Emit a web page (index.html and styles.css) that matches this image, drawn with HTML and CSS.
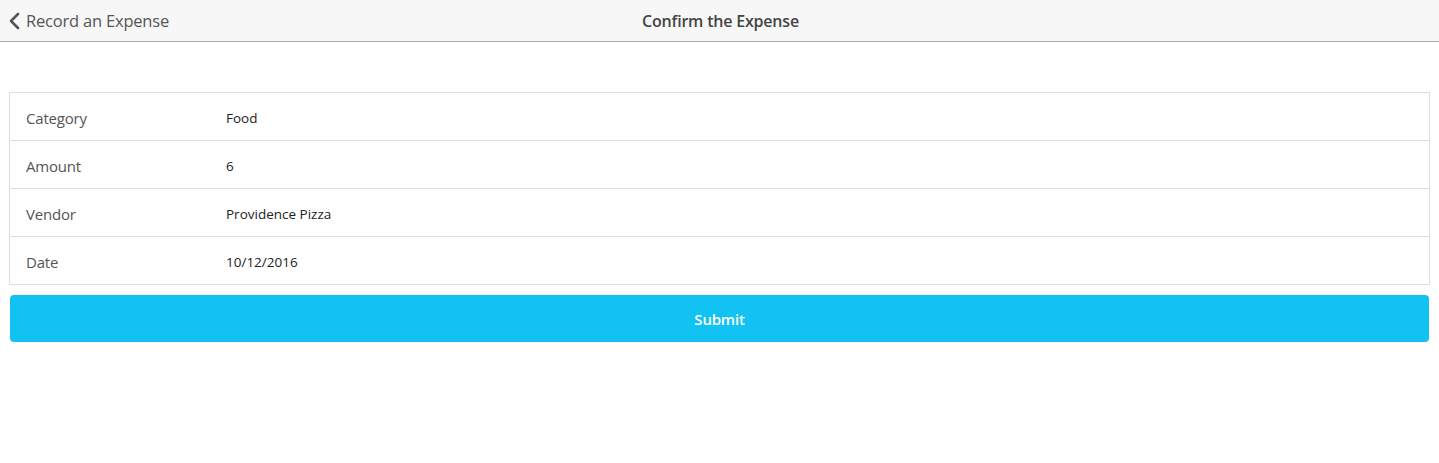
FILE: index.html
```html
<!DOCTYPE html>
<html>
<head>
<meta charset="utf-8">
<link rel="stylesheet" href="styles.css">
</head>
<body>
<header class="navbar">
  <a class="back">
    <svg class="chev" width="12" height="18" viewBox="0 0 12 18"><path d="M10 2 L3 9 L10 16" fill="none" stroke="#555" stroke-width="2.6" stroke-linecap="round" stroke-linejoin="round"/></svg>
    <span>Record an Expense</span>
  </a>
  <div class="title">Confirm the Expense</div>
</header>
<main class="content">
  <div class="list">
    <div class="row"><div class="label">Category</div><div class="value">Food</div></div>
    <div class="row"><div class="label">Amount</div><div class="value">6</div></div>
    <div class="row"><div class="label">Vendor</div><div class="value">Providence Pizza</div></div>
    <div class="row"><div class="label">Date</div><div class="value">10/12/2016</div></div>
  </div>
  <button class="submit">Submit</button>
</main>
</body>
</html>
```
FILE: styles.css
```css
* { box-sizing: border-box; }
html, body { margin: 0; padding: 0; background: #fff; }
body { font-family: "Open Sans", "Noto Sans", sans-serif; color: #333; }
.navbar {
  height: 42px;
  background: #f7f7f7;
  border-bottom: 1px solid #a9a9a9;
  display: grid;
  grid-template-columns: 1fr auto 1fr;
  align-items: center;
}
.back {
  display: flex;
  align-items: center;
  gap: 6px;
  padding-left: 8px;
  color: #555;
  font-size: 16.5px;
  letter-spacing: -0.2px;
}
.chev { display: block; }
.title {
  font-size: 16px;
  font-weight: 600;
  color: #444;
  letter-spacing: -0.2px;
  padding-left: 2px;
}
.content { padding: 50px 9px 0 9px; }
.list {
  border: 1px solid #dedede;
}
.row {
  height: 48px;
  display: flex;
  align-items: center;
  border-top: 1px solid #dedede;
  padding-top: 2px;
}
.row:first-child { border-top: none; height: 47px; }
.label {
  width: 216px;
  padding-left: 16px;
  font-size: 15px;
  color: #555;
  letter-spacing: -0.2px;
}
.value {
  font-size: 13.5px;
  color: #222;
}
.submit {
  display: block;
  width: calc(100% - 2px);
  margin: 10px 1px 0 1px;
  height: 47px;
  border: none;
  border-radius: 4px;
  background: #12c2f2;
  color: #fff;
  font-family: "Open Sans", sans-serif;
  font-size: 15px;
  font-weight: 600;
  letter-spacing: -0.2px;
}
```
